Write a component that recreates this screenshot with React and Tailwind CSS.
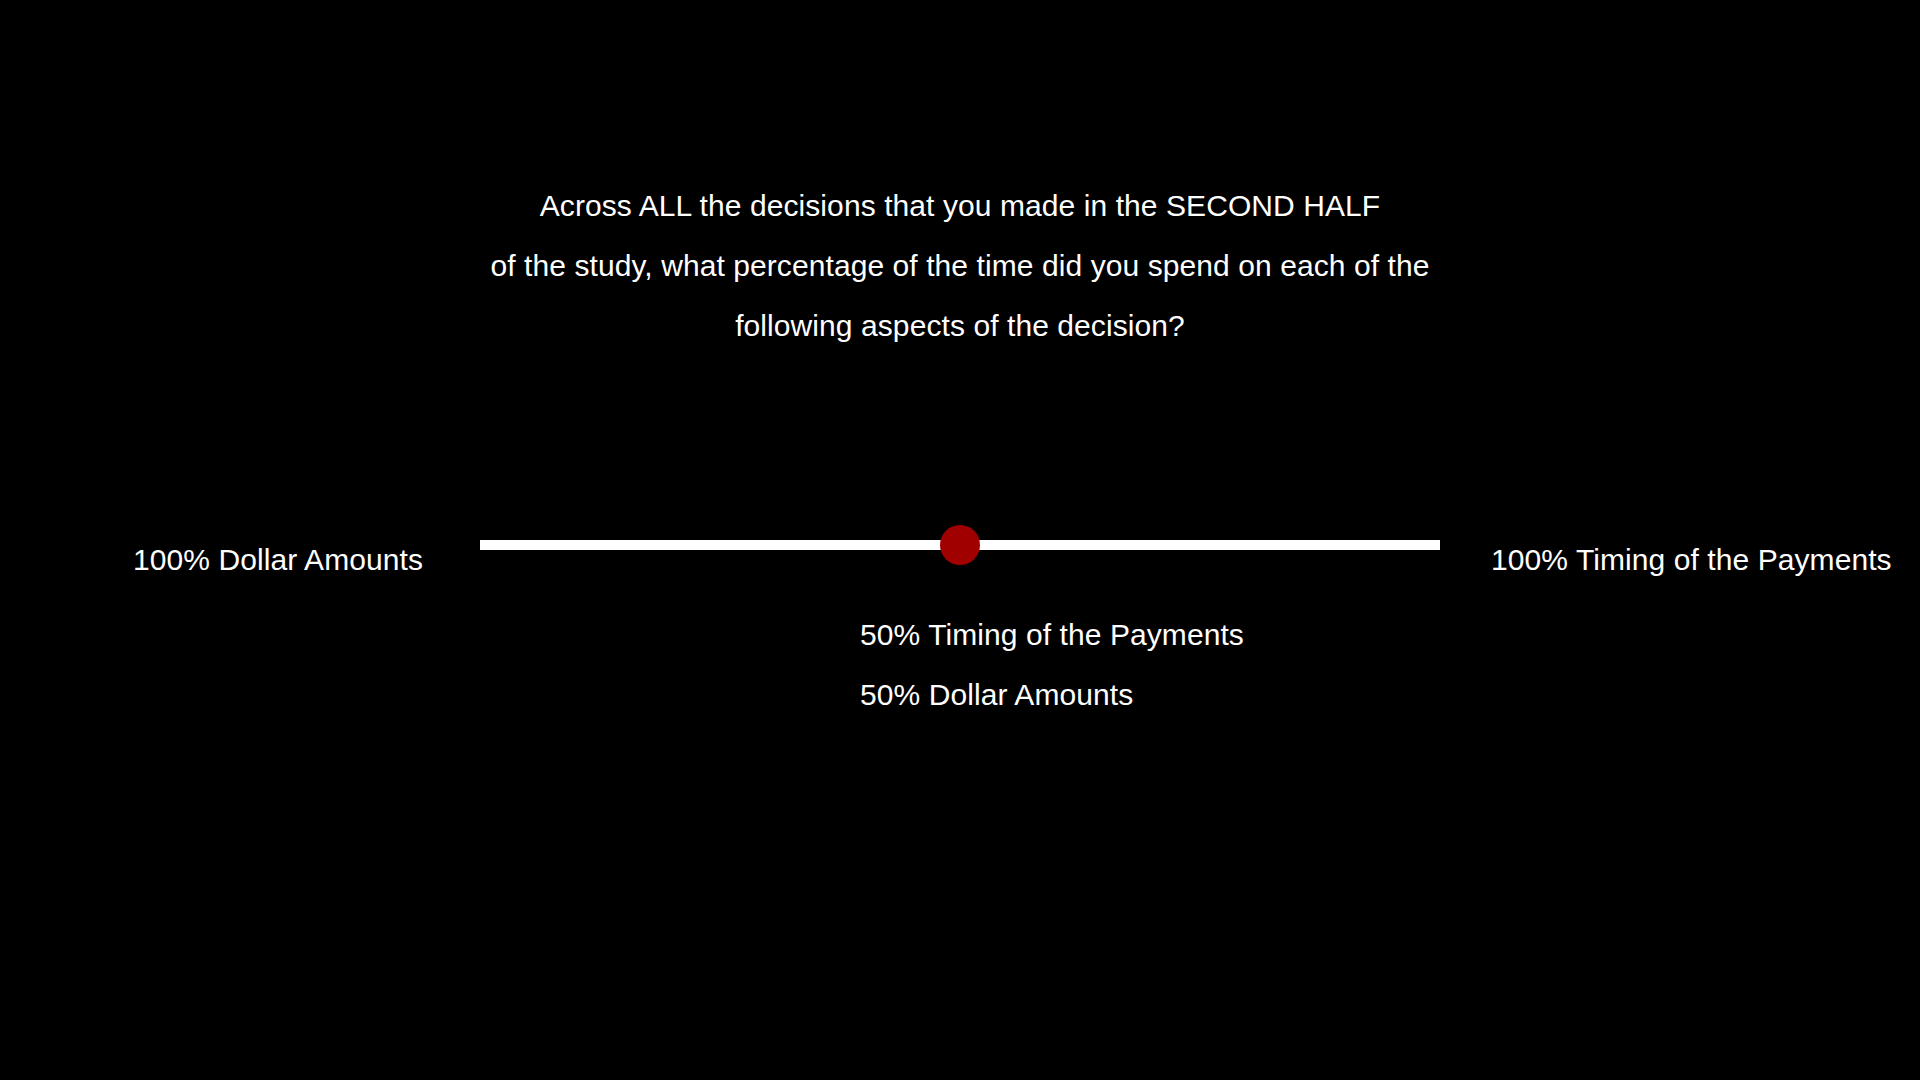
import React, { useState } from "react";

const font = { fontFamily: '"Liberation Sans", Arial, sans-serif' };

const App = () => {
  const [value] = useState(50);

  return (
    <div
      className="w-[1920px] h-[1080px] bg-black text-white overflow-hidden tracking-[0.08px] font-['Liberation_Sans',Arial,sans-serif]"
      style={font}
    >
      {/* question */}
      <div className="pt-[176px] text-center text-[30px] leading-[60px]">
        Across ALL the decisions that you made in the SECOND HALF
        <br />
        of the study, what percentage of the time did you spend on each of the
        <br />
        following aspects of the decision?
      </div>

      {/* slider row */}
      <div className="mt-[169px] flex items-start">
        <div className="w-[480px] pr-[57px] mt-[5px] text-right text-[30px] leading-[60px] whitespace-nowrap">
          100% Dollar Amounts
        </div>

        <div className="w-[960px] flex flex-col">
          <div className="relative h-[40px]">
            <div className="mt-[15px] h-[10px] bg-white" />
            <div className="absolute top-0 left-[460px] w-[40px] h-[40px] rounded-full bg-[#a00000]" />
          </div>
          <div className="mt-[40px] pl-[380px] text-[30px] leading-[60px] whitespace-nowrap">
            <div>{100 - value}% Timing of the Payments</div>
            <div>{value}% Dollar Amounts</div>
          </div>
        </div>

        <div className="pl-[51px] mt-[5px] text-[30px] leading-[60px] whitespace-nowrap">
          100% Timing of the Payments
        </div>
      </div>
    </div>
  );
};

export default App;
